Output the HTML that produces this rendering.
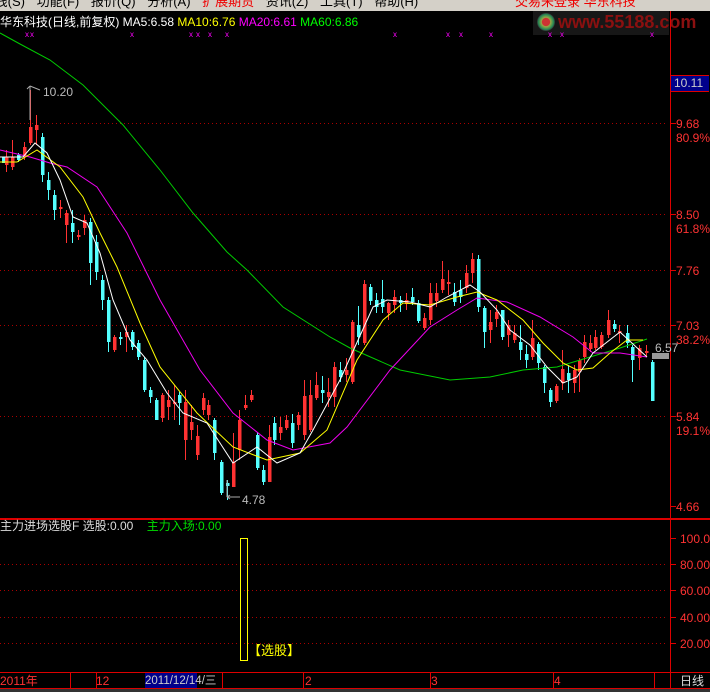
<!DOCTYPE html>
<html><head><meta charset="utf-8"><style>
html,body{margin:0;padding:0;background:#000;width:710px;height:692px;overflow:hidden}
body{position:relative;font-family:"Liberation Sans","Noto Sans CJK SC",sans-serif}
.t{position:absolute;white-space:nowrap;font-size:12px;line-height:14px}
</style></head><body>
<div style="position:absolute;left:0;top:0;width:710px;height:11px;background:#d4d0c8"></div>
<div class="t" style="left:-14px;top:-5px;color:#000;font-size:13px;word-spacing:8px">K线(S) 功能(F) 报价(Q) 分析(A) <span style="color:#e00">扩展期货</span> 资讯(Z) 工具(T) 帮助(H)</div>
<div class="t" style="left:515px;top:-5px;color:#e00;font-size:13px">交易未登录 华东科技</div>
<div class="t" style="left:0;top:15px;color:#fff">华东科技(日线,前复权) MA5:6.58 <span style="color:#ff0">MA10:6.76</span> <span style="color:#f0f">MA20:6.61</span> <span style="color:#0f0">MA60:6.86</span></div>
<div style="position:absolute;left:533px;top:11px;width:136px;height:24px;background:#1a1a1a;opacity:.9"></div>
<div style="position:absolute;left:537px;top:13px;width:18px;height:18px;border-radius:50%;background:radial-gradient(circle,#c33 30%,#9a4 35%,#285 60%,#333 70%)"></div>
<div class="t" style="left:558px;top:11px;color:#8b1010;font-size:18px;font-weight:bold;line-height:22px">www.55188.com</div>
<svg width="710" height="692" style="position:absolute;left:0;top:0" id="s">
<g stroke="#a00" stroke-dasharray="1,3" stroke-width="1">
<line x1="0" y1="123.5" x2="668" y2="123.5"/><line x1="0" y1="214.5" x2="668" y2="214.5"/><line x1="0" y1="270.5" x2="668" y2="270.5"/><line x1="0" y1="325.5" x2="668" y2="325.5"/><line x1="0" y1="416.5" x2="668" y2="416.5"/>
<line x1="0" y1="564.5" x2="668" y2="564.5"/><line x1="0" y1="590.5" x2="668" y2="590.5"/><line x1="0" y1="617.5" x2="668" y2="617.5"/><line x1="0" y1="643.5" x2="668" y2="643.5"/>
</g>
<g stroke="#d00" stroke-width="1">
<line x1="670.5" y1="11" x2="670.5" y2="692"/>
<line x1="0" y1="518.5" x2="710" y2="518.5"/>
<line x1="0" y1="519.5" x2="710" y2="519.5"/>
<line x1="0" y1="672.5" x2="710" y2="672.5"/>
<line x1="0" y1="688.5" x2="710" y2="688.5"/>
<line x1="670" y1="123.5" x2="676" y2="123.5"/><line x1="670" y1="214.5" x2="676" y2="214.5"/><line x1="670" y1="270.5" x2="676" y2="270.5"/><line x1="670" y1="325.5" x2="676" y2="325.5"/><line x1="670" y1="416.5" x2="676" y2="416.5"/><line x1="670" y1="506.5" x2="676" y2="506.5"/>
<line x1="670" y1="538.5" x2="676" y2="538.5"/><line x1="670" y1="564.5" x2="676" y2="564.5"/><line x1="670" y1="590.5" x2="676" y2="590.5"/><line x1="670" y1="617.5" x2="676" y2="617.5"/><line x1="670" y1="643.5" x2="676" y2="643.5"/>
<line x1="70.5" y1="672" x2="70.5" y2="688"/><line x1="96.5" y1="672" x2="96.5" y2="688"/><line x1="222.5" y1="672" x2="222.5" y2="688"/><line x1="303.5" y1="672" x2="303.5" y2="688"/><line x1="430.5" y1="672" x2="430.5" y2="688"/><line x1="553.5" y1="672" x2="553.5" y2="688"/><line x1="654.5" y1="672" x2="654.5" y2="688"/>
</g>
<g id="c"></g>
<g fill="none" stroke-width="1">
<polyline stroke="#0c0" points="0,33 20,44 50,60 83,85 123,125 160,170 193,213 227,252 247,270 283,307 330,337 350,348 400,370 450,380 490,377 523,370 557,367 590,357 620,348 647,339"/>
<polyline stroke="#e0e" points="0,150 30,157 50,163 67,167 97,187 127,233 160,300 200,370 233,413 267,440 293,450 330,443 347,427 390,370 430,327 457,310 477,298 507,302 540,317 573,337 593,353 620,353 647,357"/>
<polyline stroke="#ff0" points="0,162 17,162 37,150 60,167 83,197 100,233 117,267 140,323 160,367 197,413 233,447 267,460 300,453 327,430 357,360 383,320 403,303 430,305 457,297 477,292 497,300 523,320 543,343 563,363 577,370 593,368 610,353 627,340 643,340"/>
<polyline stroke="#fff" points="0,157 23,157 35,143 47,153 60,180 73,217 87,223 100,253 113,300 130,340 147,360 167,393 183,413 207,423 233,463 257,447 277,463 300,453 313,430 340,380 373,307 387,300 410,302 430,307 447,297 470,285 480,292 497,310 510,330 530,345 547,367 563,383 577,377 593,353 620,332 647,357"/>
</g>
<rect x="652" y="353" width="17" height="6" fill="#999"/>
<rect x="240.5" y="538.5" width="7" height="122" fill="none" stroke="#ff0"/>
<g fill="#f0f" font-size="8" font-family="Liberation Sans">
<text x="25" y="37">x</text><text x="30" y="37">x</text><text x="130" y="37">x</text><text x="189" y="37">x</text><text x="196" y="37">x</text><text x="208" y="37">x</text><text x="225" y="37">x</text><text x="393" y="37">x</text><text x="446" y="37">x</text><text x="459" y="37">x</text><text x="489" y="37">x</text><text x="548" y="37">x</text><text x="560" y="37">x</text><text x="650" y="37">x</text>
</g>
<path d="M30 86 V120 M30 86 l-3 3 M30 86 l10 4" stroke="#aaa" fill="none"/>
<path d="M227 497 H240 M227 497 l3 -2 M227 497 l3 2 M227 480 V497" stroke="#aaa" fill="none"/>
</svg>
<div class="t" style="left:43px;top:85px;color:#bbb">10.20</div>
<div class="t" style="left:242px;top:493px;color:#bbb">4.78</div>
<div class="t" style="left:655px;top:341px;color:#bbb">6.57</div>
<div style="position:absolute;left:671px;top:75px;width:38px;height:15px;background:#00008b;border-top:1px solid #d00;border-bottom:1px solid #d00"></div>
<div class="t" style="left:674px;top:76px;color:#ccc">10.11</div>
<div class="t" style="left:676px;top:117px;color:#f33">9.68<br>80.9%</div>
<div class="t" style="left:676px;top:208px;color:#f33">8.50<br>61.8%</div>
<div class="t" style="left:676px;top:264px;color:#f33">7.76</div>
<div class="t" style="left:676px;top:319px;color:#f33">7.03<br>38.2%</div>
<div class="t" style="left:676px;top:410px;color:#f33">5.84<br>19.1%</div>
<div class="t" style="left:676px;top:500px;color:#f33">4.66</div>
<div class="t" style="left:680px;top:532px;color:#f33">100.0</div>
<div class="t" style="left:680px;top:558px;color:#f33">80.00</div>
<div class="t" style="left:680px;top:584px;color:#f33">60.00</div>
<div class="t" style="left:680px;top:611px;color:#f33">40.00</div>
<div class="t" style="left:680px;top:637px;color:#f33">20.00</div>
<div class="t" style="left:0;top:519px;color:#ddd">主力进场选股F 选股:0.00 &nbsp;&nbsp;&nbsp;<span style="color:#0d0">主力入场:0.00</span></div>
<div class="t" style="left:248px;top:644px;color:#ff0;font-size:13px">【选股】</div>
<div class="t" style="left:0;top:674px;color:#f33">2011年</div>
<div class="t" style="left:96px;top:674px;color:#f33">12</div>
<div style="position:absolute;left:145px;top:673px;width:52px;height:15px;background:#00008b"></div>
<div class="t" style="left:145px;top:674px;color:#ccc;font-size:11.5px">2011/12/14/三</div>
<div class="t" style="left:305px;top:674px;color:#f33">2</div>
<div class="t" style="left:431px;top:674px;color:#f33">3</div>
<div class="t" style="left:554px;top:674px;color:#f33">4</div>
<div class="t" style="left:680px;top:674px;color:#ddd">日线</div>
<div style="position:absolute;left:0;top:689px;width:710px;height:3px;background:#333"></div>
<script>
var d=[[2,157,163,157,163,'b'],[5,157,165,150,172,'r'],[11,157,167,140,170,'r'],[17,155,160,153,162,'b'],[23,147,157,142,160,'r'],[29,127,143,90,145,'r'],[35,125,130,115,145,'r'],[41,137,175,133,182,'b'],[47,180,190,172,200,'b'],[53,195,210,190,220,'b'],[59,207,209,200,218,'r'],[65,213,225,210,243,'r'],[71,223,232,210,243,'b'],[77,235,237,230,240,'r'],[83,220,228,215,235,'r'],[89,222,263,218,285,'b'],[95,242,272,235,280,'b'],[101,280,300,275,310,'b'],[107,300,342,297,352,'b'],[113,337,350,335,352,'r'],[119,337,339,332,345,'b'],[125,332,337,325,352,'r'],[131,332,347,330,350,'b'],[137,343,357,340,360,'b'],[143,360,390,357,392,'b'],[149,390,397,387,403,'b'],[155,400,420,398,420,'b'],[161,395,418,393,422,'r'],[167,400,407,390,420,'r'],[173,402,404,385,420,'r'],[178,395,403,392,425,'b'],[184,402,440,390,460,'r'],[190,422,430,405,440,'r'],[196,436,455,425,460,'r'],[202,398,410,393,415,'r'],[207,405,415,400,420,'r'],[213,420,453,418,460,'b'],[220,462,493,460,495,'b'],[226,483,486,480,500,'b'],[232,462,487,433,487,'r'],[238,420,450,410,460,'r'],[244,405,408,395,410,'r'],[250,395,400,390,402,'r'],[256,435,468,432,470,'b'],[262,470,482,465,485,'b'],[268,437,482,425,482,'r'],[273,423,440,417,445,'b'],[279,427,433,417,440,'r'],[285,420,428,415,430,'r'],[291,423,443,414,448,'b'],[297,415,425,412,430,'r'],[303,396,435,380,440,'r'],[309,395,430,380,432,'r'],[315,385,398,372,400,'r'],[321,390,393,376,403,'b'],[327,392,397,378,407,'r'],[333,367,397,362,407,'r'],[339,370,377,362,382,'b'],[345,370,375,358,382,'r'],[351,322,382,320,384,'r'],[357,325,337,306,345,'b'],[363,284,343,280,345,'r'],[369,287,301,284,305,'b'],[375,300,307,293,313,'b'],[381,299,307,280,313,'b'],[387,303,313,302,320,'r'],[393,297,305,290,313,'r'],[399,300,303,296,312,'b'],[405,300,304,293,310,'r'],[411,297,302,288,305,'b'],[417,303,321,300,323,'b'],[423,318,328,313,330,'r'],[429,293,320,283,325,'r'],[435,293,301,283,307,'r'],[441,279,290,261,293,'r'],[447,282,284,270,295,'r'],[453,292,302,283,306,'b'],[459,290,297,280,303,'b'],[465,273,288,265,293,'r'],[471,259,273,253,283,'r'],[477,259,307,255,312,'b'],[483,308,332,306,348,'b'],[489,322,330,310,343,'r'],[495,312,319,305,327,'r'],[501,310,337,310,340,'b'],[507,325,335,320,347,'r'],[513,333,340,325,343,'r'],[519,342,350,325,360,'b'],[525,354,360,345,368,'b'],[531,338,357,320,360,'r'],[537,344,363,342,370,'b'],[543,367,383,365,393,'b'],[549,390,402,388,407,'b'],[555,386,401,384,403,'r'],[561,369,383,350,390,'r'],[567,373,380,365,393,'b'],[573,370,383,365,393,'r'],[578,360,372,358,392,'r'],[583,342,357,335,363,'r'],[589,343,349,335,352,'r'],[594,337,348,330,350,'r'],[600,335,347,332,349,'r'],[607,320,335,310,338,'r'],[613,324,329,320,332,'b'],[618,331,333,325,343,'r'],[626,333,343,325,348,'b'],[631,347,360,345,382,'b'],[638,348,358,345,370,'r'],[645,351,353,345,356,'r'],[651,362,401,360,401,'b']];
var g=document.getElementById('c'),h='';
d.forEach(function(a){var col=a[5]=='r'?'#ff3232':'#54ffff';var x=a[0];
h+='<line x1="'+(x+1.5)+'" y1="'+a[3]+'" x2="'+(x+1.5)+'" y2="'+a[4]+'" stroke="'+col+'"/>';
h+='<rect x="'+x+'" y="'+a[1]+'" width="3.5" height="'+Math.max(1,a[2]-a[1])+'" fill="'+col+'"/>';});
g.innerHTML=h;
</script>
</body></html>
